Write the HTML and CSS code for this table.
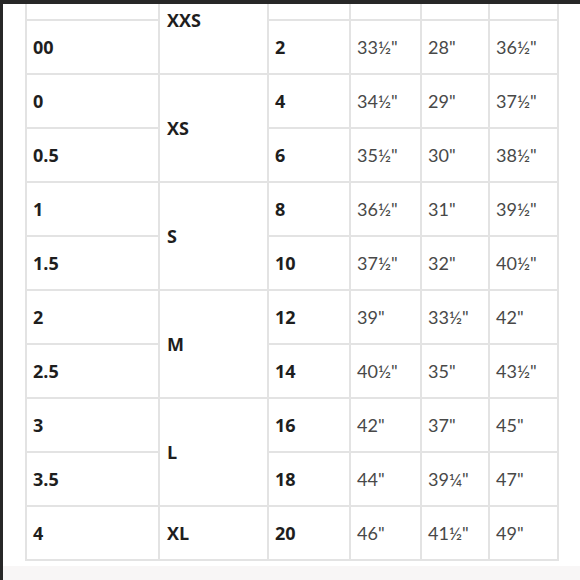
FILE: index.html
```html
<!DOCTYPE html>
<html lang="en">
<head>
<meta charset="utf-8">
<title>Size chart</title>
<link rel="stylesheet" href="styles.css">
</head>
<body>
<div class="frame">
  <div class="viewport">
    <table class="chart">
      <colgroup>
        <col class="c-num">
        <col class="c-alpha">
        <col class="c-uk">
        <col class="c-bust">
        <col class="c-waist">
        <col class="c-hip">
      </colgroup>
      <tbody>
        <tr><td class="b"></td><td class="b alpha" rowspan="2">XXS</td><td class="b"></td><td></td><td></td><td></td></tr>
        <tr><td class="b">00</td><td class="b">2</td><td>33½"</td><td>28"</td><td>36½"</td></tr>
        <tr><td class="b">0</td><td class="b alpha" rowspan="2">XS</td><td class="b">4</td><td>34½"</td><td>29"</td><td>37½"</td></tr>
        <tr><td class="b">0.5</td><td class="b">6</td><td>35½"</td><td>30"</td><td>38½"</td></tr>
        <tr><td class="b">1</td><td class="b alpha" rowspan="2">S</td><td class="b">8</td><td>36½"</td><td>31"</td><td>39½"</td></tr>
        <tr><td class="b">1.5</td><td class="b">10</td><td>37½"</td><td>32"</td><td>40½"</td></tr>
        <tr><td class="b">2</td><td class="b alpha" rowspan="2">M</td><td class="b">12</td><td>39"</td><td>33½"</td><td>42"</td></tr>
        <tr><td class="b">2.5</td><td class="b">14</td><td>40½"</td><td>35"</td><td>43½"</td></tr>
        <tr><td class="b">3</td><td class="b alpha" rowspan="2">L</td><td class="b">16</td><td>42"</td><td>37"</td><td>45"</td></tr>
        <tr><td class="b">3.5</td><td class="b">18</td><td>44"</td><td>39¼"</td><td>47"</td></tr>
        <tr><td class="b">4</td><td class="b alpha">XL</td><td class="b">20</td><td>46"</td><td>41½"</td><td>49"</td></tr>
      </tbody>
    </table>
  </div>
  <div class="strip"></div>
</div>
</body>
</html>
```

FILE: styles.css
```css
html, body {
  margin: 0;
  padding: 0;
  background: #ffffff;
}

.frame {
  width: 580px;
  height: 580px;
  box-sizing: border-box;
  border-top: 4px solid #272727;
  border-left: 3px solid #272727;
  display: flex;
  flex-direction: column;
  overflow: hidden;
}

.viewport {
  height: 562px;
  overflow: hidden;
  background: #ffffff;
}

.strip {
  flex: 1;
  background: #f8f6f6;
}

.chart {
  margin-top: -39px;
  margin-left: 22px;
  width: 534px;
  table-layout: fixed;
  border-collapse: separate;
  border-spacing: 0;
  border-top: 2px solid #e3e3e3;
  border-left: 2px solid #e3e3e3;
}

.c-num { width: 133px; }
.c-alpha { width: 109px; }
.c-uk { width: 82px; }
.c-bust { width: 71px; }
.c-waist { width: 68px; }
.c-hip { width: 69px; }

.chart td {
  box-sizing: border-box;
  height: 54px;
  padding: 0 0 0 6px;
  border-right: 2px solid #e3e3e3;
  border-bottom: 2px solid #e3e3e3;
  vertical-align: middle;
  font-family: Lato, "Open Sans", sans-serif;
  font-size: 18px;
  font-weight: 400;
  color: #484848;
  white-space: nowrap;
}

.chart td.b {
  font-family: "Open Sans", "Noto Sans", sans-serif;
  font-weight: 700;
  font-size: 18px;
  color: #1e1e1e;
}

.chart td.alpha {
  padding-left: 7px;
}
```
